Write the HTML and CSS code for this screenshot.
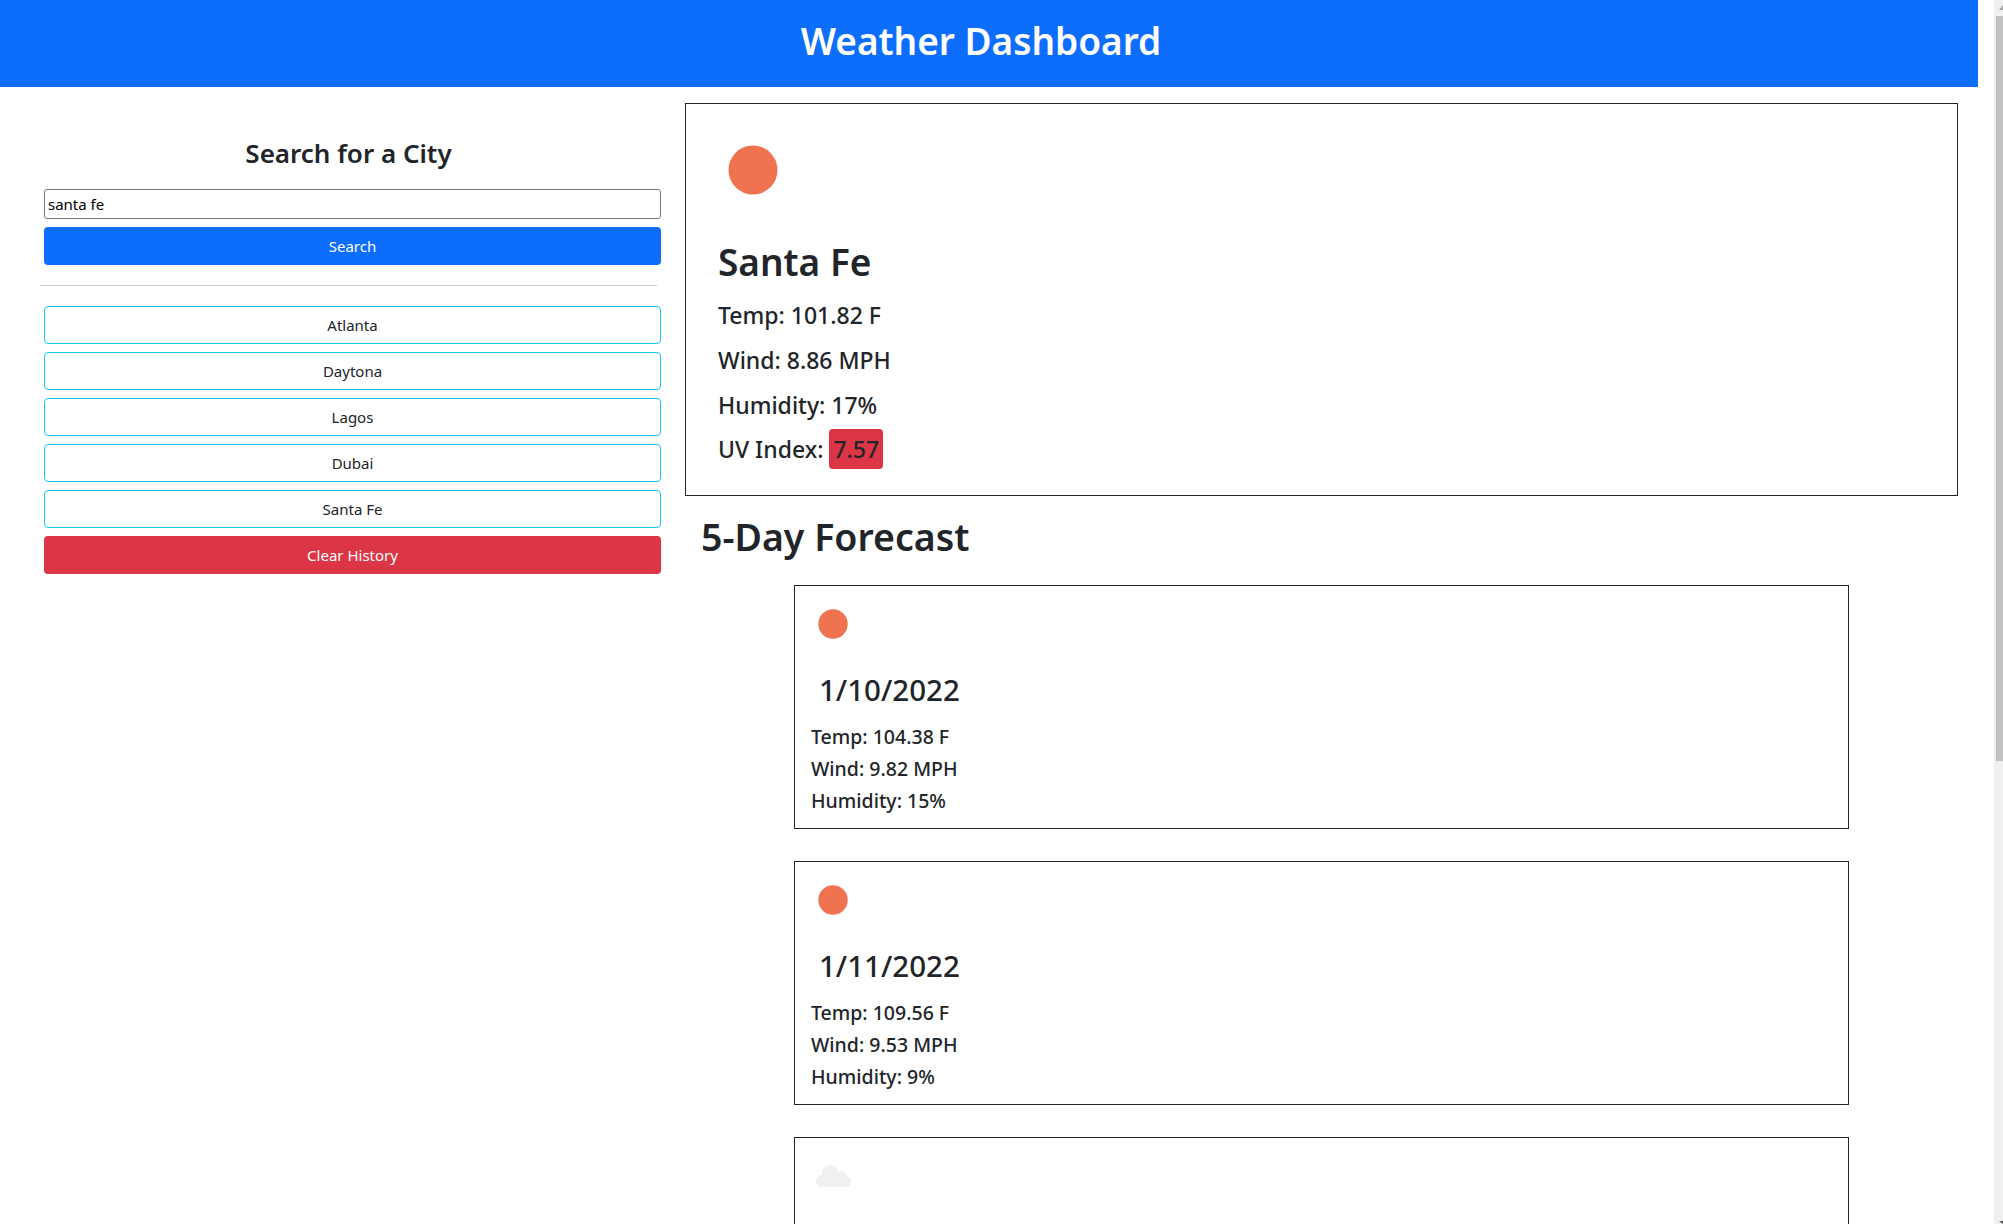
FILE: index.html
```html
<!DOCTYPE html>
<html lang="en">
<head>
    <meta charset="UTF-8">
    <meta name="viewport" content="width=device-width, initial-scale=1.0">
    <title>Weather Dashboard</title>
    <link rel="stylesheet" href="styles.css">
</head>
<body>
    <div class="page">
        <header class="top-bar">
            <h1>Weather Dashboard</h1>
        </header>
        <div class="content">
            <aside class="sidebar">
                <h2 class="search-title">Search for a City</h2>
                <form class="search-form">
                    <input class="city-input" type="text" value="santa fe">
                    <button class="btn btn-primary" type="button">Search</button>
                </form>
                <hr class="divider">
                <div class="history">
                    <button class="btn btn-city" type="button">Atlanta</button>
                    <button class="btn btn-city" type="button">Daytona</button>
                    <button class="btn btn-city" type="button">Lagos</button>
                    <button class="btn btn-city" type="button">Dubai</button>
                    <button class="btn btn-city" type="button">Santa Fe</button>
                    <button class="btn btn-danger" type="button">Clear History</button>
                </div>
            </aside>
            <main class="weather">
                <section class="current">
                    <svg class="icon-large" viewBox="0 0 100 100"><circle cx="50" cy="50" r="24.5" fill="#ef7350"/></svg>
                    <h2 class="city-name">Santa Fe</h2>
                    <p class="stat">Temp: 101.82 F</p>
                    <p class="stat">Wind: 8.86 MPH</p>
                    <p class="stat">Humidity: 17%</p>
                    <p class="stat stat-uv">UV Index: <span class="uv-badge">7.57</span></p>
                </section>
                <h2 class="forecast-title">5-Day Forecast</h2>
                <div class="forecast">
                    <article class="day-card">
                        <svg class="icon-small" viewBox="0 0 100 100"><circle cx="50" cy="50" r="24.5" fill="#ef7350"/></svg>
                        <h3 class="day-date">1/10/2022</h3>
                        <p class="day-stat">Temp: 104.38 F</p>
                        <p class="day-stat">Wind: 9.82 MPH</p>
                        <p class="day-stat">Humidity: 15%</p>
                    </article>
                    <article class="day-card">
                        <svg class="icon-small" viewBox="0 0 100 100"><circle cx="50" cy="50" r="24.5" fill="#ef7350"/></svg>
                        <h3 class="day-date">1/11/2022</h3>
                        <p class="day-stat">Temp: 109.56 F</p>
                        <p class="day-stat">Wind: 9.53 MPH</p>
                        <p class="day-stat">Humidity: 9%</p>
                    </article>
                    <article class="day-card">
                        <svg class="icon-small" viewBox="0 0 60 60">
                            <g fill="#f0f0f0">
                                <rect x="13" y="30" width="35" height="11" rx="5.500"/>
                                <circle cx="27" cy="27" r="8"/>
                                <circle cx="38" cy="30" r="5"/>
                                <circle cx="19" cy="33" r="4.500"/>
                            </g>
                        </svg>
                    </article>
                </div>
            </main>
        </div>
    </div>
    <div class="scrollbar">
        <span class="arrow-up"></span>
        <span class="thumb"></span>
        <span class="arrow-down"></span>
    </div>
</body>
</html>
```

FILE: styles.css
```css
* {
    box-sizing: border-box;
}

html, body {
    height: 100%;
}

body {
    font-family: "Noto Sans", "Open Sans", sans-serif;
    color: #212529;
    background-color: #fff;
    margin: 0;
    display: flex;
    justify-content: space-between;
    height: 100vh;
    overflow: hidden;
}

.page {
    width: 1978px;
    flex: none;
}

.top-bar {
    height: 87px;
    background-color: #0d6efd;
    padding: 0 16px 7px 0;
    display: flex;
    align-items: center;
    justify-content: center;
}

.top-bar h1 {
    margin: 0;
    color: #fff;
    font-size: 37px;
    font-weight: 600;
}

.content {
    display: flex;
}

/* left column */
.sidebar {
    width: 685px;
    flex: none;
    padding: 49px 24px 0 40px;
}

.search-title {
    margin: 0 4px 19px 0;
    text-align: center;
    font-size: 26px;
    font-weight: 600;
    line-height: 34px;
}

.search-form,
.history {
    display: flex;
    flex-direction: column;
    gap: 8px;
    margin-left: 4px;
}

.city-input {
    height: 30px;
    padding: 0 3px;
    border: 1px solid #767676;
    border-radius: 3px;
    font: 15px "Noto Sans", sans-serif;
    color: #000;
}

.btn {
    height: 38px;
    border-radius: 4px;
    border: 1px solid transparent;
    font: 15px "Noto Sans", sans-serif;
    text-align: center;
    color: #212529;
    background: none;
}

.btn-primary {
    background-color: #0d6efd;
    color: #fff;
}

.btn-city {
    border-color: #0dcaf0;
}

.btn-danger {
    background-color: #dc3545;
    color: #fff;
}

.divider {
    margin: 20px 4px 20px 0;
    border: 0;
    border-top: 1px solid #ccc;
}

/* right column */
.weather {
    width: 1273px;
    flex: none;
    padding-top: 16px;
}

.current {
    height: 393px;
    border: 1px solid #212529;
    padding: 16px 17px;
}

.icon-large {
    display: block;
    width: 100px;
    height: 100px;
}

.city-name {
    margin: 18px 0 11px 15px;
    font-size: 37px;
    font-weight: 600;
    line-height: 48px;
}

.stat {
    margin: 0 0 9px 15px;
    font-size: 23px;
    font-weight: 500;
    line-height: 36px;
}

.stat-uv {
    margin-bottom: 0;
    line-height: 40px;
    margin-top: -3px;
}

.uv-badge {
    display: inline-block;
    height: 40px;
    padding: 0 4px;
    background-color: #dc3545;
    border-radius: 4px;
}

.forecast-title {
    margin: 17px 0 24px 16px;
    font-size: 37.500px;
    font-weight: 600;
    line-height: 48px;
}

.forecast {
    width: 1055px;
    margin: 0 auto;
    display: flex;
    flex-direction: column;
    gap: 32px;
}

.day-card {
    min-height: 244px;
    border: 1px solid #212529;
    padding: 8px 16px;
}

.icon-small {
    display: block;
    width: 60px;
    height: 60px;
    margin-left: -8px;
}

.day-date {
    margin: 16px 0 11px 8px;
    font-size: 29.500px;
    font-weight: 500;
    line-height: 40px;
}

.day-stat {
    margin: 0;
    font-size: 19.500px;
    font-weight: 500;
    line-height: 32px;
}

/* window scrollbar */
.scrollbar {
    width: 9px;
    flex: none;
    height: 100%;
    background-color: #f0f0f0;
    display: flex;
    flex-direction: column;
    align-items: flex-end;
}

.thumb {
    width: 7px;
    height: 745px;
    background-color: #c1c1c1;
}

.arrow-up {
    width: 0;
    height: 0;
    margin: 5px 0 6px;
    border-left: 4px solid transparent;
    border-bottom: 5px solid #a3a3a3;
}

.arrow-down {
    width: 0;
    height: 0;
    margin-top: auto;
    border-left: 4px solid transparent;
    border-top: 3px solid #505050;
}
```
